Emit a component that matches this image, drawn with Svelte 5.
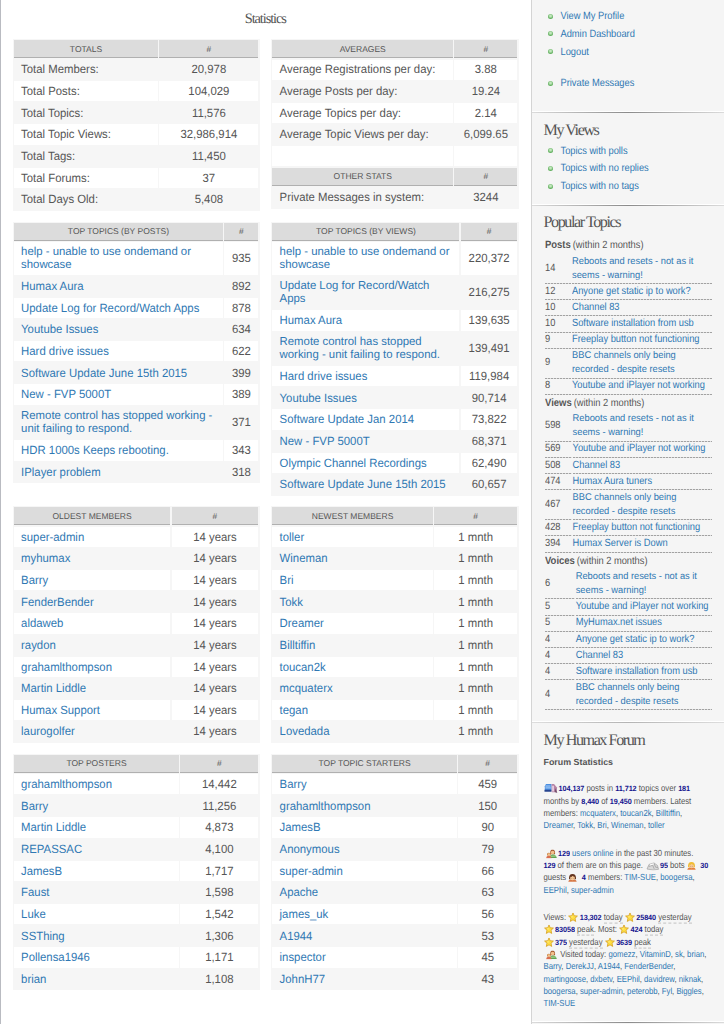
<script>
  const section = (title, split, rows, opts = {}) => ({ title, split, rows, ...opts });
  const row = (label, value) => ({ label, value });
  const pairs = (names, values) => names.map((n, i) => row(n, Array.isArray(values) ? values[i] : values));

  const tables = [
    section('TOTALS', 144, [
      row('Total Members:', '20,978'), row('Total Posts:', '104,029'), row('Total Topics:', '11,576'),
      row('Total Topic Views:', '32,986,914'), row('Total Tags:', '11,450'), row('Total Forums:', '37'),
      row('Total Days Old:', '5,408')
    ], { plain: true, odd: true }),
    section('AVERAGES', 180.5, [
      row('Average Registrations per day:', '3.88'), row('Average Posts per day:', '19.24'),
      row('Average Topics per day:', '2.14'), row('Average Topic Views per day:', '6,099.65'), row('', ''),
      { head: 'OTHER STATS' }, row('Private Messages in system:', '3244')
    ], { plain: true, other: true }),
    section('TOP TOPICS (BY POSTS)', 209, [
      row('help - unable to use ondemand or\nshowcase', '935'), row('Humax Aura', '892'),
      row('Update Log for Record/Watch Apps', '878'), row('Youtube Issues', '634'), row('Hard drive issues', '622'),
      row('Software Update June 15th 2015', '399'), row('New - FVP 5000T', '389'),
      row('Remote control has stopped working -\nunit failing to respond.', '371'),
      row('HDR 1000s Keeps rebooting.', '343'), row('IPlayer problem', '318')
    ]),
    section('TOP TOPICS (BY VIEWS)', 187, [
      row('help - unable to use ondemand or\nshowcase', '220,372'), row('Update Log for Record/Watch\nApps', '216,275'),
      row('Humax Aura', '139,635'), row('Remote control has stopped\nworking - unit failing to respond.', '139,491'),
      row('Hard drive issues', '119,984'), row('Youtube Issues', '90,714'), row('Software Update Jan 2014', '73,822'),
      row('New - FVP 5000T', '68,371'), row('Olympic Channel Recordings', '62,490'),
      row('Software Update June 15th 2015', '60,657')
    ]),
    section('OLDEST MEMBERS', 156.2, pairs(['super-admin', 'myhumax', 'Barry', 'FenderBender', 'aldaweb', 'raydon', 'grahamlthompson', 'Martin Liddle', 'Humax Support', 'laurogolfer'], '14 years')),
    section('NEWEST MEMBERS', 160.2, pairs(['toller', 'Wineman', 'Bri', 'Tokk', 'Dreamer', 'Billtiffin', 'toucan2k', 'mcquaterx', 'tegan', 'Lovedada'], '1 mnth')),
    section('TOP POSTERS', 165, pairs(['grahamlthompson', 'Barry', 'Martin Liddle', 'REPASSAC', 'JamesB', 'Faust', 'Luke', 'SSThing', 'Pollensa1946', 'brian'],
      ['14,442', '11,256', '4,873', '4,100', '1,717', '1,598', '1,542', '1,306', '1,171', '1,108'])),
    section('TOP TOPIC STARTERS', 184.2, pairs(['Barry', 'grahamlthompson', 'JamesB', 'Anonymous', 'super-admin', 'Apache', 'james_uk', 'A1944', 'inspector', 'JohnH77'],
      ['459', '150', '90', '79', '66', '63', '56', '53', '45', '43']))
  ];

  const reboots = 'Reboots and resets - not as it\nseems - warning!';
  const bbc = 'BBC channels only being\nrecorded - despite resets';
  const popular = [
    { name: 'Posts', split: 26, rows: [['14', reboots], ['12', 'Anyone get static ip to work?'], ['10', 'Channel 83'], ['10', 'Software installation from usb'], ['9', 'Freeplay button not functioning'], ['9', bbc], ['8', 'Youtube and iPlayer not working']] },
    { name: 'Views', split: 26.6, rows: [['598', reboots], ['569', 'Youtube and iPlayer not working'], ['508', 'Channel 83'], ['474', 'Humax Aura tuners'], ['467', bbc], ['428', 'Freeplay button not functioning'], ['394', 'Humax Server is Down']] },
    { name: 'Voices', split: 29.7, rows: [['6', reboots], ['5', 'Youtube and iPlayer not working'], ['5', 'MyHumax.net issues'], ['4', 'Anyone get static ip to work?'], ['4', 'Channel 83'], ['4', 'Software installation from usb'], ['4', bbc]] }
  ];
</script>

{#snippet people(names, end = '')}
  {#each names as n, i}<a>{n}</a>{i < names.length - 1 ? ', ' : end}{/each}
{/snippet}

{#snippet star()}
  <svg class="ico star" viewBox="0 0 10 10" preserveAspectRatio="none"><path d="M5 .7 6.2 3.5 9.4 3.8 7 5.9 7.7 9.1 5 7.5 2.3 9.1 3 5.9.6 3.8 3.8 3.5Z" fill="#ffdf42" stroke="#d9a62c" stroke-width=".9" stroke-linejoin="round" /><path d="M5 2.5 4.4 4.2 2.7 4.5 4.3 5.3Z" fill="#fff6bd" /></svg>
{/snippet}

{#snippet person(hair, shirt)}
  <svg class="ico face" viewBox="0 0 10 10" preserveAspectRatio="none"><path d="M.3 9.2Q.5 6.9 3 6.6H7Q9.5 6.9 9.7 9.2Z" fill={shirt} /><path d="M1.1 6.4Q.7 .6 5 .6T8.9 6.4Z" fill={hair} /><ellipse cx="5" cy="4.9" rx="2.7" ry="2.7" fill="#f6c795" /><path d="M2.2 4.1Q4.3 4.2 5.3 2.6 6.1 3.9 7.8 4.1 7.5 1.5 5 1.5T2.2 4.1" fill={hair} /><path d="M4 5V5.5M6 5V5.5" stroke="#67422d" stroke-width=".6" /></svg>
{/snippet}

{#snippet group()}
  <svg class="ico group" viewBox="0 0 11 9" preserveAspectRatio="none"><path d="M4.2 4.7Q3.8 0 6.6.2T9.1 4.7Z" fill="#a75c31" /><circle cx="6.6" cy="3" r="1.8" fill="#f3c28d" /><path d="M3.6 8.5Q4 5 7 5T10.8 8.5Z" fill="#5fa553" /><path d="M1.1 6Q.6 3.2 2.8 3.2T4.9 6Z" fill="#c27937" /><circle cx="3" cy="5" r="1.3" fill="#f3c28d" /><path d="M.1 8.6Q.3 6.2 2.8 6.2T5.6 8.6Z" fill="#d96f50" /><path d="M4.8 6.8 9.8 6.5" stroke="#b1d994" stroke-width="1" /></svg>
{/snippet}

{#snippet heads(title)}
  <div class="tr th"><div>{title}</div><div>#</div></div>
{/snippet}

<div class="page">
  <main>
    <h2>Statistics</h2>
    <div class="stats">
      {#each tables as t}
        <div class="table" class:plain={t.plain} style="--split:{t.split}px">
          {@render heads(t.title)}
          {#each t.rows as r, i}
            {#if r.head}
              {@render heads(r.head)}
            {:else}
              <div class="tr" class:double={r.label.includes('\n')} class:white={t.odd ? i % 2 === 1 : i % 2 === 0 && i < 5 || !t.other && i % 2 === 0}>
                <div class="label">{#if t.plain}<span>{r.label}</span>{:else}<a>{r.label}</a>{/if}</div>
                <div class="num"><span>{r.value}</span></div>
              </div>
            {/if}
          {/each}
        </div>
      {/each}
    </div>
  </main>

  <aside>
    <section class="account">
      <ul>
        <li><a>View My Profile</a></li>
        <li><a>Admin Dashboard</a></li>
        <li class="spaced"><a>Logout</a></li>
        <li><a>Private Messages</a></li>
      </ul>
    </section>
    <section class="views">
      <h3>My Views</h3>
      <ul>
        <li><a>Topics with polls</a></li>
        <li><a>Topics with no replies</a></li>
        <li><a>Topics with no tags</a></li>
      </ul>
    </section>
    <section class="popular">
      <h3>Popular Topics</h3>
      {#each popular as p}
        <div class="pop" style="--first:{p.split}px">
          <div class="pophead"><b>{p.name}</b><span>(within 2 months)</span></div>
          {#each p.rows as [n, title]}
            <div class="poprow" class:two={title.includes('\n')}>
              <div><span>{n}</span></div><div><a>{title}</a></div>
            </div>
          {/each}
        </div>
      {/each}
    </section>
    <section class="forum">
      <h3>My Humax Forum</h3>
      <h4>Forum Statistics</h4>
      <div class="block">
        <p><svg class="ico posts" viewBox="0 0 14 10" preserveAspectRatio="none"><path d="M2 .8H7.5V7H.8V3Z" fill="#4a8ee0" /><path d="M1.4 2.7H6.5M1.4 4.5H6.8" stroke="#c6e2ff" stroke-width=".8" /><path d="M.5 6.2H7.5V8.3H.5Z" fill="#27458f" /><path d="M7.6 .8H10L13 4V8.8H7.8Z" fill="#b785a6" /><path d="M8.3 2.5H9.8V8H8.3Z" fill="#f3dceb" /><path d="M11 4.5 13.4 9.4 10.8 8.5Z" fill="#72536f" /></svg><b>104,137</b> posts in <b>11,712</b> topics over <b>181</b></p>
        <p>months by <b>8,440</b> of <b>19,450</b> members. Latest</p>
        <p>members: {@render people(['mcquaterx', 'toucan2k', 'Billtiffin'], ',')}</p>
        <p>{@render people(['Dreamer', 'Tokk', 'Bri', 'Wineman', 'toller'])}</p>
      </div>
      <div class="block">
        <p>{@render group()}<b>129</b> <a>users online</a> in the past 30 minutes.</p>
        <p><b>129</b> of them are on this page. <svg class="ico bots" viewBox="0 0 13 9" preserveAspectRatio="none"><path d="M1 7.5 3 3 8 1.5 11.5 4 12.5 7.8 7 8.5Z" fill="#dadada" stroke="#a4a4a4" stroke-width=".7" /><path d="M2.8 5 6.7 3.8 8.2 7.3M8 2 9.6 5.7 12 6" fill="none" stroke="#999" stroke-width=".7" /><path d="M4 3.6 7.7 2.4" stroke="#fff" /></svg><b>95</b> bots {@render person('#f0bd36', '#e47e3d')}<b class="gap">30</b></p>
        <p>guests {@render person('#63351f', '#d77846')}<b class="gap">4</b> members: {@render people(['TIM-SUE', 'boogersa'], ',')}</p>
        <p>{@render people(['EEPhil', 'super-admin'])}</p>
      </div>
      <div class="block">
        <p>Views: {@render star()}<b>13,302</b> <u>today</u> {@render star()}<b>25840</b> <u>yesterday</u></p>
        <p>{@render star()}<b>83058</b> <u>peak</u>. Most: {@render star()}<b>424</b> <u>today</u></p>
        <p>{@render star()}<b>375</b> <u>yesterday</u> {@render star()}<b>3639</b> <u>peak</u></p>
        <p>{@render group()} Visited today: {@render people(['gomezz', 'VitaminD', 'sk', 'brian'], ',')}</p>
        <p>{@render people(['Barry', 'DerekJJ', 'A1944', 'FenderBender'], ',')}</p>
        <p>{@render people(['martingoose', 'dxbetv', 'EEPhil', 'davidrew', 'niknak'], ',')}</p>
        <p>{@render people(['boogersa', 'super-admin', 'peterobb', 'Fyl', 'Biggles'], ',')}</p>
        <p><a>TIM-SUE</a></p>
      </div>
    </section>
  </aside>
</div>

<style>
  :global(body) { margin: 0; background: #fff; overflow: hidden; }
  * { box-sizing: border-box; }
  .page {
    display: flex; width: 724px; height: 1024px; overflow: hidden;
    border-left: 1px solid #b9bbc1; color: #555;
    font-family: "Liberation Sans", Arial, sans-serif; text-rendering: geometricPrecision;
  }
  a { color: #2f78b3; text-decoration: none; }
  h2, h3, h4, p, ul { margin: 0; padding: 0; font-weight: normal; }
  main { width: 530px; flex: none; }
  h2 { height: 39px; padding-right: 1.5px; line-height: 38.4px; text-align: center; font-family: "Liberation Serif", "Times New Roman", serif; font-size: 14.4px; letter-spacing: -1.1px; }
  .stats {
    display: grid; grid-template-columns: 247px 247.5px; column-gap: 11.5px;
    grid-template-rows: 182.6px 284.6px 247.4px 240px; align-items: start; padding-left: 11.7px;
  }
  .table { display: flex; flex-direction: column; gap: 1.35px; padding: 1.3px; background: #f6f6f6; font-size: 11.37px; }
  .tr { display: grid; grid-template-columns: var(--split) 1fr; gap: 1.35px; height: 20.3px; line-height: 12.4px; }
  .tr > div { display: flex; align-items: center; }
  .tr .label { padding-left: 7.1px; white-space: pre; }
  .tr .num { justify-content: center; }
  .label > *, .num > * { transform: translateY(.5px) scaleY(1.05); }
  .double .label > * { transform: translateY(.5px) scaleY(1.02); }
  .white > div { background: #fff; }
  .double { height: 32.8px; }
  .th { height: 17.9px; font-size: 8.5px; }
  .th > div { justify-content: center; background: #dcdcdc; border-bottom: 1px solid #b0b0b0; white-space: nowrap; }

  aside { flex: 1; background: #f5f5f5; border-left: 1px solid #d4d4d4; font-size: 9.33px; letter-spacing: -.02px; white-space: nowrap; }
  section { padding: 0 12px 0 11.5px; border-bottom: 1px solid; border-image: linear-gradient(90deg, #dcdcdc, #8b8b8b 50%, #dcdcdc) 1; box-shadow: inset 0 -1px #fff; }
  h3 { font-family: "Liberation Serif", "Times New Roman", serif; font-size: 16.2px; letter-spacing: -1.46px; line-height: 20px; }
  ul { list-style: none; }
  li { display: flex; align-items: center; height: 17.7px; padding-left: 4.5px; }
  li::before { content: ""; width: 5px; height: 5px; margin-right: 7.5px; border-radius: 50%; background: radial-gradient(circle at 50% 40%, #c2e8bd 0 20%, #5fae5c 65%); }
  li a, .pophead > *, .poprow span, .poprow a { transform: scaleY(1.12); }
  .poprow.two a { transform: scaleY(1.05); }
  .spaced { margin-bottom: 14px; }
  .account { height: 113px; padding-top: 7.3px; }
  .views { height: 93px; padding-top: 6.5px; }
  .views ul { padding-top: 2.4px; }
  .popular { height: 517px; padding-top: 6.3px; border-image: linear-gradient(90deg, #dedede, #b4b4b4 50%, #dedede) 1; }
  .popular h3 { margin-bottom: 4.9px; }
  .pop { width: 167px; margin-left: 1.5px; }
  .pophead { display: flex; height: 16.8px; line-height: 17.4px; }
  .pophead b { margin-right: 2px; font-size: 9.5px; }
  .poprow { display: grid; grid-template-columns: var(--first) 1fr; column-gap: 1px; height: 16.2px; line-height: 13.8px; }
  .poprow > div {
    display: flex; align-items: center; padding-bottom: 1px; white-space: pre;
    background: repeating-linear-gradient(90deg, #a2a2a2 0 2px, #dedede 2px 3px) bottom / 100% 1px no-repeat;
  }
  .poprow.two { height: 30px; }

  .forum { height: 300px; padding-top: 6.7px; font-size: 7.75px; letter-spacing: -.02px; }
  h4 { height: 24px; line-height: 24px; font-size: 8.9px; font-weight: bold; letter-spacing: 0; }
  .block { margin-top: 9.5px; padding-bottom: 6px; }
  .block + .block { margin-top: 9px; }
  p { height: 12.35px; line-height: 12.35px; transform: scaleY(1.14); }
  p b { display: inline-block; transform: scaleY(.9); color: #16168f; font-size: 7.3px; letter-spacing: -.08px; }
  u { text-decoration: none; border-bottom: 1px dashed #ccc; }
  .ico { display: inline-block; vertical-align: -1.5px; }
  .posts { width: 14px; height: 9px; margin-right: 1px; }
  .star { width: 10px; height: 8.8px; margin: 0 1.5px 0 0; }
  .face { width: 9px; height: 8px; }
  .group { width: 11px; height: 8px; margin: 0 1px 0 2.5px; }
  .bots { width: 13px; height: 8px; margin: 0 1px; }
  .gap { margin-left: 4.5px; }
</style>
